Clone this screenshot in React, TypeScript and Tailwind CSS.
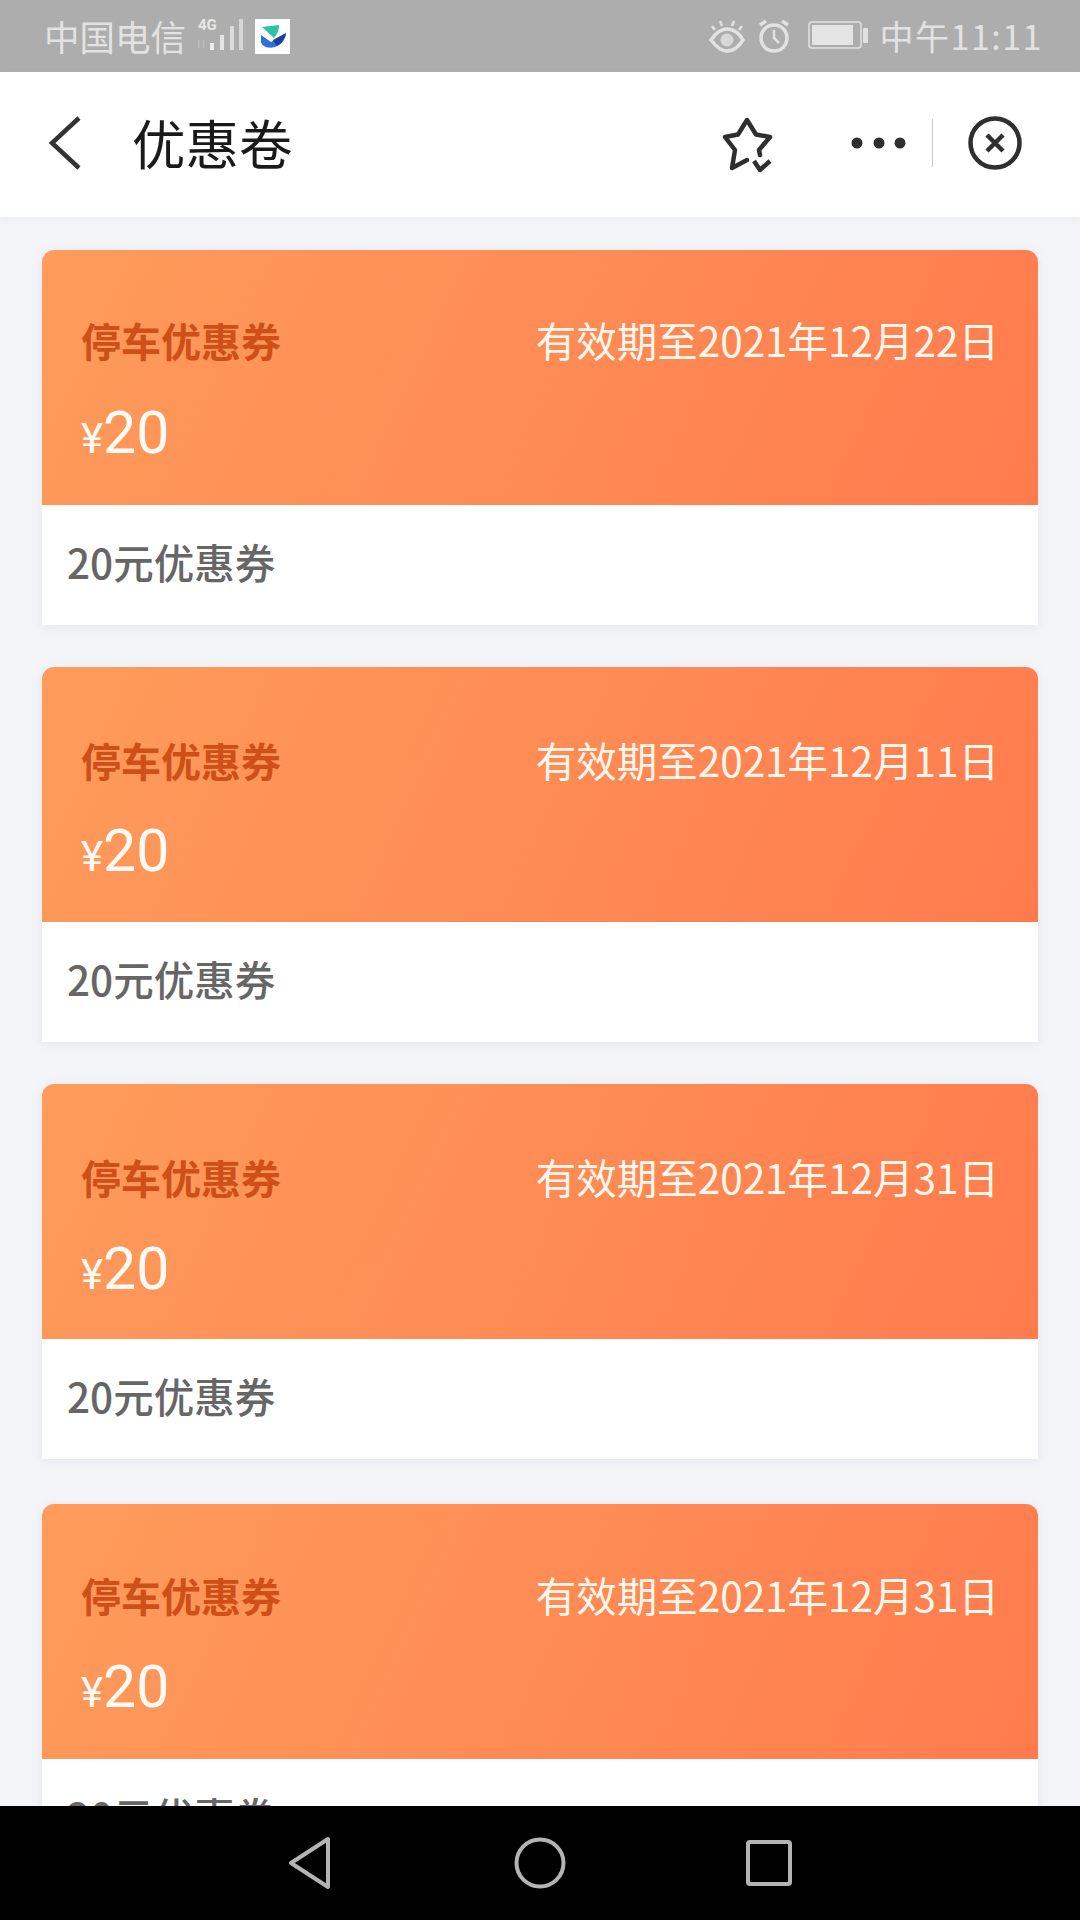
const font = { fontFamily: '"Noto Sans CJK SC", "Noto Sans", sans-serif' };

function Coupon({ date, className = "", pad = "pt-[67px]", gap = "mt-[35px]" }: { date: string; className?: string; pad?: string; gap?: string }) {
  return (
    <div className={`rounded-t-xl bg-white shadow-[0_2px_10px_rgba(180,185,200,0.25)] shrink-0 ${className}`}>
      <div className={`h-[255px] rounded-t-xl bg-[linear-gradient(115deg,#fe9c5b_0%,#ff7b4e_100%)] pl-[39px] pr-[39px] ${pad}`}>
        <div className="flex items-center justify-between h-[52px]">
          <span className="text-[40px] leading-none font-bold text-[#cf4f18]">停车优惠券</span>
          <span className="text-[40.5px] leading-none text-[#fff6ec]">有效期至{date}</span>
        </div>
        <div className={`flex items-baseline text-[#fffaf3] leading-none ${gap}`} style={{ fontFamily: 'Roboto, "Noto Sans", sans-serif' }}>
          <span className="text-[42px] leading-none">¥</span>
          <span className="text-[59px] leading-none">20</span>
        </div>
      </div>
      <div className="h-[120px] pl-[25px] pt-[32px] text-[40.5px] leading-[50px] font-medium text-[#666666]">20元优惠券</div>
    </div>
  );
}

function StatusBar() {
  return (
    <div className="h-[72px] bg-[#adadad] flex items-center pl-[44px] pr-[37px] text-[#e2e2e2] shrink-0">
      <span className="text-[35.5px] leading-none">中国电信</span>
      <svg className="ml-[6px] mt-[-2px]" width="54" height="40" viewBox="0 0 54 40">
        <text x="6" y="15" fontSize="15" fontWeight="700" fill="#e6e6e6" fontFamily="Roboto, sans-serif">4G</text>
        <rect x="6" y="25" width="1.5" height="8" fill="#bdbdbd" />
        <rect x="11" y="25" width="1.5" height="8" fill="#bdbdbd" />
        <rect x="18" y="28" width="4" height="7" fill="#ececec" />
        <rect x="28" y="20" width="4" height="15" fill="#e4e4e4" />
        <rect x="38" y="11" width="4" height="24" fill="#dcdcdc" />
        <rect x="47" y="4" width="4" height="31" fill="#d6d6d6" />
      </svg>
      <svg className="ml-[9px]" width="35" height="35" viewBox="0 0 35 35">
        <rect width="35" height="35" fill="#ffffff" />
        <path d="M7 8 L24 6 C24 10 23 14 19 19 Z" fill="#2cc2a8" />
        <path d="M6 16 L16 23 L31 14 C30 21 26 26 20 28 C12 30 6 27 6 22 Z" fill="#2f6fe0" />
        <path d="M18 21 L31 14 C30 20 27 24 22 27 Z" fill="#1a3f9c" />
      </svg>
      <div className="flex-1" />
      <svg width="36" height="36" viewBox="0 0 36 36" fill="none" stroke="#e2e2e2" strokeWidth="3.5">
        <path d="M2 22 C8 13 13 11 18 11 C23 11 29 13 34 22 C29 30 23 33 18 33 C13 33 8 30 2 22 Z" />
        <circle cx="18" cy="22" r="6.5" fill="#d8d8d8" stroke="none" />
        <path d="M6 12 L3 8 M13 8 L11 3 M23 8 L25 3 M30 12 L33 8" strokeWidth="2.5" />
      </svg>
      <svg className="ml-[12px]" width="34" height="36" viewBox="0 0 34 36" fill="none" stroke="#e2e2e2" strokeWidth="3.5">
        <circle cx="17" cy="20" r="13" />
        <path d="M17 12 V20 L22 25" strokeWidth="2.5" />
        <path d="M3 7 L9 3 M31 7 L25 3" />
      </svg>
      <svg className="ml-[17px]" width="72" height="30" viewBox="0 0 72 30" fill="none">
        <rect x="1" y="1" width="52" height="26" rx="3" stroke="#e2e2e2" strokeWidth="1.5" />
        <rect x="4" y="4" width="41" height="20" fill="#e4e4e4" />
        <rect x="55" y="7" width="5" height="15" rx="1" fill="#e2e2e2" />
      </svg>
      <span className="text-[34px] leading-none tracking-[1.5px]">中午11:11</span>
    </div>
  );
}

function NavBar() {
  return (
    <div className="h-[145px] bg-white flex items-center shrink-0 pl-[47px] pr-[58px] pb-[3px] relative z-10 shadow-[0_2px_6px_rgba(200,200,210,0.2)]">
      <svg width="36" height="56" viewBox="0 0 36 56" fill="none" stroke="#333333" strokeWidth="4.5">
        <path d="M32 3 L5 28 L32 53" />
      </svg>
      <span className="ml-[49px] mb-[2px] text-[53.5px] leading-none text-[#1a1a1a]">优惠卷</span>
      <div className="flex-1" />
      <svg width="60" height="60" viewBox="0 0 60 60" fill="none" stroke="#2f2f2f" strokeWidth="4.5" strokeLinecap="round" strokeLinejoin="round">
        <path d="M41 42 L40 37 L51 24 L37 21.5 L28 7 L19 21.5 L6 24 L16 37 L13 55 L28 47" />
        <path d="M35 48 L41 57 L51 48" strokeLinecap="butt" />
      </svg>
      <svg className="ml-[72px]" width="66" height="14" viewBox="0 0 66 14" fill="#2f2f2f">
        <circle cx="6" cy="7" r="5.5" />
        <circle cx="28" cy="7" r="5.5" />
        <circle cx="49" cy="7" r="5.5" />
      </svg>
      <div className="ml-[15px] w-[1px] h-[48px] bg-[#c9c9c9]" />
      <svg className="ml-[35px]" width="54" height="54" viewBox="0 0 54 54" fill="none" stroke="#2f2f2f">
        <circle cx="27" cy="27" r="24.5" strokeWidth="4.5" />
        <path d="M19 19 L35 35 M35 19 L19 35" strokeWidth="4.5" />
      </svg>
    </div>
  );
}

function SoftKeys() {
  return (
    <div className="h-[114px] bg-black flex items-center justify-center shrink-0 relative z-10 pl-[2px]">
      <svg width="504" height="54" viewBox="0 0 504 54" fill="none" stroke="#b4b4b4" strokeWidth="4" strokeLinejoin="round">
        <path d="M39 3 L2 27 L39 51 Z" />
        <circle cx="251" cy="27" r="23.5" />
        <rect x="459" y="6" width="42" height="42" rx="2" />
      </svg>
    </div>
  );
}

export default function App() {
  return (
    <div className="w-[1080px] h-[1920px] flex flex-col overflow-hidden bg-[#f4f5f9]" style={font}>
      <StatusBar />
      <NavBar />
      <div className="flex-1 min-h-0 overflow-hidden px-[42px] pt-[33px] flex flex-col">
        <Coupon date="2021年12月22日" pad="pt-[64px]" gap="mt-[37px]" />
        <Coupon date="2021年12月11日" className="mt-[42px]" />
        <Coupon date="2021年12月31日" className="mt-[42px]" gap="mt-[36px]" />
        <Coupon date="2021年12月31日" className="mt-[45px]" pad="pt-[65px]" gap="mt-[36px]" />
      </div>
      <SoftKeys />
    </div>
  );
}
